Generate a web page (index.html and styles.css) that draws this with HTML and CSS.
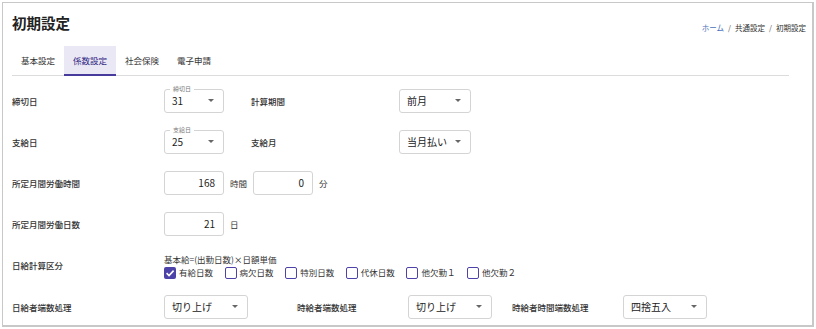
FILE: index.html
```html
<!DOCTYPE html>
<html lang="ja">
<head>
<meta charset="utf-8">
<link rel="stylesheet" href="styles.css">
</head>
<body>
<div class="card">
  <div class="header">
    <h1 class="title">初期設定</h1>
    <nav class="crumbs"><a class="crumb-link">ホーム</a><span class="sep">/</span><span>共通設定</span><span class="sep">/</span><span>初期設定</span></nav>
  </div>
  <div class="tabs">
    <div class="tab">基本設定</div>
    <div class="tab active">係数設定</div>
    <div class="tab">社会保険</div>
    <div class="tab">電子申請</div>
  </div>
  <div class="form">
    <div class="row">
      <div class="label">締切日</div>
      <div class="select w60"><span class="float">締切日</span><span>31</span><span class="arrow"></span></div>
      <div class="label2">計算期間</div>
      <div class="select w72"><span>前月</span><span class="arrow"></span></div>
    </div>
    <div class="row">
      <div class="label">支給日</div>
      <div class="select w60"><span class="float">支給日</span><span>25</span><span class="arrow"></span></div>
      <div class="label2">支給月</div>
      <div class="select w72"><span>当月払い</span><span class="arrow"></span></div>
    </div>
    <div class="row">
      <div class="label">所定月間労働時間</div>
      <div class="input w60">168</div>
      <div class="unit">時間</div>
      <div class="input w60">0</div>
      <div class="unit">分</div>
    </div>
    <div class="row">
      <div class="label">所定月間労働日数</div>
      <div class="input w60">21</div>
      <div class="unit">日</div>
    </div>
    <div class="row">
      <div class="label">日給計算区分</div>
      <div class="checks">
        <div class="formula">基本給=(出勤日数)×日額単価</div>
        <div class="check-row">
          <label class="check"><span class="box checked"><svg viewBox="0 0 12 12" width="12" height="12"><path d="M2.6 6.2 L5 8.5 L9.6 3.6" fill="none" stroke="#fff" stroke-width="1.6"/></svg></span>有給日数</label>
          <label class="check"><span class="box"></span>病欠日数</label>
          <label class="check"><span class="box"></span>特別日数</label>
          <label class="check"><span class="box"></span>代休日数</label>
          <label class="check"><span class="box"></span>他欠勤１</label>
          <label class="check"><span class="box"></span>他欠勤２</label>
        </div>
      </div>
    </div>
    <div class="row last">
      <div class="label">日給者端数処理</div>
      <div class="select w84"><span>切り上げ</span><span class="arrow"></span></div>
      <div class="label3">時給者端数処理</div>
      <div class="select w84"><span>切り上げ</span><span class="arrow"></span></div>
      <div class="label4">時給者時間端数処理</div>
      <div class="select w84"><span>四捨五入</span><span class="arrow"></span></div>
    </div>
  </div>
</div>
</body>
</html>
```
FILE: styles.css
```css
* { box-sizing: border-box; }
html, body { margin: 0; padding: 0; background: #fff; }
body {
  font-family: "Noto Sans CJK JP", "Noto Sans", sans-serif;
  color: #333;
  font-size: 10px;
}
.card {
  margin: 2px 0 0 2px;
  width: 812px;
  height: 325px;
  border: 1px solid #c8c8c8;
  border-right-width: 2px;
  border-bottom-width: 2px;
  padding: 0 0 0 9px;
  overflow: hidden;
}
.header {
  display: flex;
  justify-content: space-between;
  align-items: flex-start;
  padding-right: 6px;
}
.title {
  margin: 9px 0 0 0;
  font-size: 14.5px;
  line-height: 22px;
  font-weight: 700;
  color: #222;
}
.crumbs {
  margin-top: 19px;
  font-size: 7.5px;
  line-height: 12px;
  color: #333;
  display: flex;
}
.crumb-link { color: #4a72b8; }
.sep { margin: 0 4px; color: #555; }
.tabs {
  display: flex;
  margin-top: 12px;
  width: 777px;
  border-bottom: 1px solid #dcdcdc;
  height: 30px;
}
.tab {
  padding: 0 9px;
  width: 52px;
  text-align: center;
  white-space: nowrap;
  font-size: 8.5px;
  line-height: 29px;
  color: #333;
  display: flex;
  justify-content: center;
}
.tab.active {
  background: #ebe8f6;
  border-bottom: 2px solid #463a9c;
  color: #2c2580;
  line-height: 28px;
  height: 30px;
}
.form { padding-top: 4px; }
.row {
  display: flex;
  align-items: center;
  height: 41px;
}
.label {
  width: 152px;
  font-size: 8.5px;
  font-weight: 500;
  color: #333;
}
.label2 {
  width: 148px;
  margin-left: 27px;
  font-size: 8.5px;
  font-weight: 500;
}
.label3 {
  width: 111px;
  margin-left: 49px;
  font-size: 8.5px;
  font-weight: 500;
}
.label4 {
  width: 111px;
  margin-left: 20px;
  font-size: 8.5px;
  font-weight: 500;
}
.select, .input {
  position: relative;
  height: 24px;
  border: 1px solid #d4d4d4;
  border-radius: 3px;
  display: flex;
  align-items: center;
  font-size: 10px;
  color: #222;
}
.select { padding: 0 7px; justify-content: space-between; }
.input { justify-content: flex-end; padding: 0 8px; }
.w60 { width: 60px; }
.w72 { width: 72px; }
.w84 { width: 84px; }
.arrow {
  width: 0; height: 0;
  border-left: 3.5px solid transparent;
  border-right: 3.5px solid transparent;
  border-top: 3.5px solid #666;
  margin-right: 2px;
}
.float {
  position: absolute;
  top: -5px;
  left: 5px;
  padding: 0 3px;
  background: #fff;
  font-size: 6px;
  line-height: 8px;
  color: #777;
}
.unit {
  margin: 0 6px;
  font-size: 8.5px;
  white-space: nowrap;
}
.checks { display: flex; flex-direction: column; padding-top: 3px; }
.formula { font-size: 8.5px; line-height: 12px; color: #333; }
.check-row { display: flex; margin-top: 1px; }
.check {
  width: 60.6px;
  display: flex;
  align-items: center;
  font-size: 8.5px;
  line-height: 13px;
  color: #333;
}
.box {
  width: 12px;
  height: 12px;
  border: 1.5px solid #4d42a8;
  border-radius: 2px;
  margin-right: 3px;
  display: inline-flex;
  align-items: center;
  justify-content: center;
}
.box.checked { background: #4d42a8; border: none; }
.row.last { margin-top: 1px; }
```
